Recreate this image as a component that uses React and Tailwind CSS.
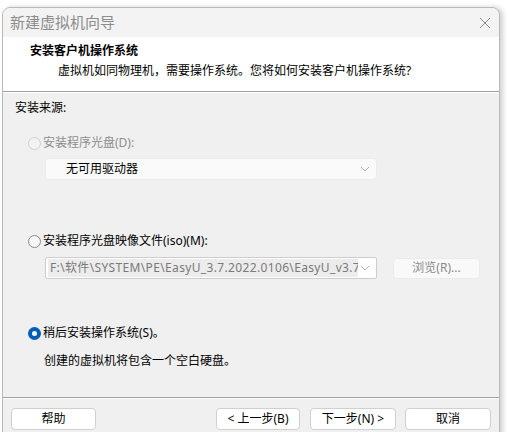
import React from "react";

const font = { fontFamily: '"Noto Sans", "Noto Sans CJK SC", sans-serif' };

function Radio({ state }) {
  if (state === "checked") {
    return (
      <span className="w-[13px] h-[13px] rounded-full bg-[#005fb8] flex items-center justify-center shrink-0">
        <span className="w-[5px] h-[5px] rounded-full bg-white" />
      </span>
    );
  }
  if (state === "disabled") {
    return <span className="w-[13px] h-[13px] rounded-full border border-[#cfcfcf] bg-[#f3f3f3] shrink-0" />;
  }
  return <span className="w-[13px] h-[13px] rounded-full border border-[#8b8b8b] bg-[#f7f7f7] shrink-0" />;
}

function Chevron() {
  return (
    <svg width="10" height="6" viewBox="0 0 10 6" className="shrink-0">
      <path d="M1 1 L5 5 L9 1" fill="none" stroke="#b0b0b0" strokeWidth="1" />
    </svg>
  );
}

function Btn({ children, w }) {
  return (
    <div
      className={`h-[22px] ${w} bg-white border border-[#d0d0d0] rounded-[4px] flex items-center justify-center text-[12px] text-black leading-none`}
    >
      {children}
    </div>
  );
}

export default function App() {
  return (
    <div className="w-[508px] h-[432px] bg-white overflow-hidden pt-[7px] pl-[2px]" style={font}>
      <div className="w-[498px] h-[460px] bg-[#f0f0f0] border border-[#b9b9b9] rounded-t-[8px] shadow-[3px_0_5px_rgba(0,0,0,0.18)] flex flex-col overflow-hidden">
        {/* Title bar */}
        <div className="h-[29px] bg-[#f3f3f3] flex items-center justify-between pl-[7px] pr-[7px] shrink-0">
          <span className="text-[15px] text-[#8c8c8c] leading-none">新建虚拟机向导</span>
          <svg width="12" height="12" viewBox="0 0 12 12" className="mr-[1px]">
            <path d="M1 1 L11 11 M11 1 L1 11" stroke="#8a8a8a" strokeWidth="1" />
          </svg>
        </div>
        {/* Header */}
        <div className="h-[55px] bg-white shrink-0 pt-[6px] border-b border-[#a0a0a0]">
          <div className="pl-[27px] text-[12px] font-bold text-black leading-[16px]">安装客户机操作系统</div>
          <div className="pl-[55px] mt-[4px] text-[12px] text-black leading-[16px]">
            虚拟机如同物理机，需要操作系统。您将如何安装客户机操作系统?
          </div>
        </div>
        <div className="h-px bg-white shrink-0" />
        {/* Body */}
        <div className="h-[304px] shrink-0 flex flex-col pt-[7px] text-[12px] leading-[16px]">
          <div className="pl-[12px] text-black">安装来源:</div>

          <div className="mt-[19px] pl-[25px] flex items-center gap-[2px] text-[#8d8d8d]">
            <Radio state="disabled" />
            <span>安装程序光盘(D):</span>
          </div>
          <div className="mt-[7px] ml-[42px] w-[332px] h-[22px] bg-[#fafafa] border border-[#ececec] rounded-[3px] flex items-center justify-between pl-[20px] pr-[6px]">
            <span className="text-black">无可用驱动器</span>
            <Chevron />
          </div>

          <div className="mt-[53px] pl-[25px] flex items-center gap-[2px] text-black">
            <Radio state="off" />
            <span>安装程序光盘映像文件(iso)(M):</span>
          </div>
          <div className="mt-[8px] ml-[42px] flex items-center gap-[16px]">
            <div className="w-[332px] h-[22px] bg-white border border-[#cdcdcd] rounded-[2px] flex items-center justify-between pl-[2px] pr-[6px]">
              <div className="w-[310px] h-[18px] bg-[#ececec] overflow-hidden whitespace-nowrap text-[#7a7a7a] pl-[2px] leading-[18px] tracking-[0.35px]">
                F:\软件\SYSTEM\PE\EasyU_3.7.2022.0106\EasyU_v3.7.iso
              </div>
              <Chevron />
            </div>
            <div className="w-[87px] h-[21px] bg-[#f9f9f9] border border-[#ebebeb] rounded-[4px] flex items-center justify-center text-[#8a8a8a] leading-none">
              浏览(R)...
            </div>
          </div>

          <div className="mt-[46px] pl-[25px] flex items-center gap-[2px] text-black">
            <Radio state="checked" />
            <span>稍后安装操作系统(S)。</span>
          </div>
          <div className="mt-[12px] pl-[41px] text-black">创建的虚拟机将包含一个空白硬盘。</div>
        </div>
        {/* Separator */}
        <div className="h-px bg-[#a0a0a0] shrink-0" />
        <div className="h-px bg-white shrink-0" />
        {/* Footer */}
        <div className="pt-[9px] pl-[8px] pr-[8px] flex items-center shrink-0">
          <Btn w="w-[85px]">帮助</Btn>
          <div className="flex-1" />
          <Btn w="w-[84px]">&lt; 上一步(B)</Btn>
          <div className="w-[10px]" />
          <Btn w="w-[86px]">下一步(N) &gt;</Btn>
          <div className="w-[9px]" />
          <Btn w="w-[86px]">取消</Btn>
        </div>
      </div>
    </div>
  );
}
